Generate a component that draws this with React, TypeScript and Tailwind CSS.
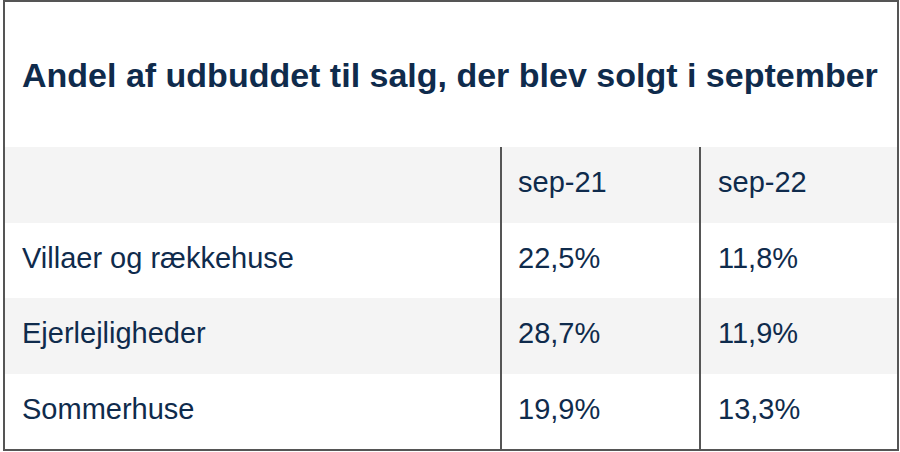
const rows = [
  { label: 'Villaer og rækkehuse', a: '22,5%', b: '11,8%' },
  { label: 'Ejerlejligheder', a: '28,7%', b: '11,9%' },
  { label: 'Sommerhuse', a: '19,9%', b: '13,3%' },
];

function Row({ label, a, b, shaded }: { label: string; a: string; b: string; shaded?: boolean }) {
  return (
    <div className={`grid h-[75.5px] grid-cols-[495px_199px_198px] ${shaded ? 'bg-[#f4f4f4]' : 'bg-white'}`}>
      <div className="flex items-center pl-[17px] pb-[4px]">{label}</div>
      <div className="flex items-center border-l-2 border-[#555] pl-[16px] pb-[4px]">{a}</div>
      <div className="flex items-center border-l-2 border-[#555] pl-[17px] pb-[4px]">{b}</div>
    </div>
  );
}

export default function App() {
  return (
    <div className="h-[452px] w-[900px] bg-white pl-[3px]" style={{ fontFamily: '"Liberation Sans", Arial, sans-serif' }}>
      <div className="flex h-[451px] w-[896px] flex-col border-2 border-[#555] text-[#0f2b4c]">
        {/* Titel */}
        <div className="flex h-[145px] items-center pl-[17px]">
          <h1 className="text-[34px] font-bold leading-none tracking-normal">
            Andel af udbuddet til salg, der blev solgt i september
          </h1>
        </div>

        {/* Tabel */}
        <div className="text-[29px] leading-none">
          <Row label="" a="sep-21" b="sep-22" shaded />
          {rows.map((r, i) => (
            <Row key={r.label} {...r} shaded={i % 2 === 1} />
          ))}
        </div>
      </div>
    </div>
  );
}
